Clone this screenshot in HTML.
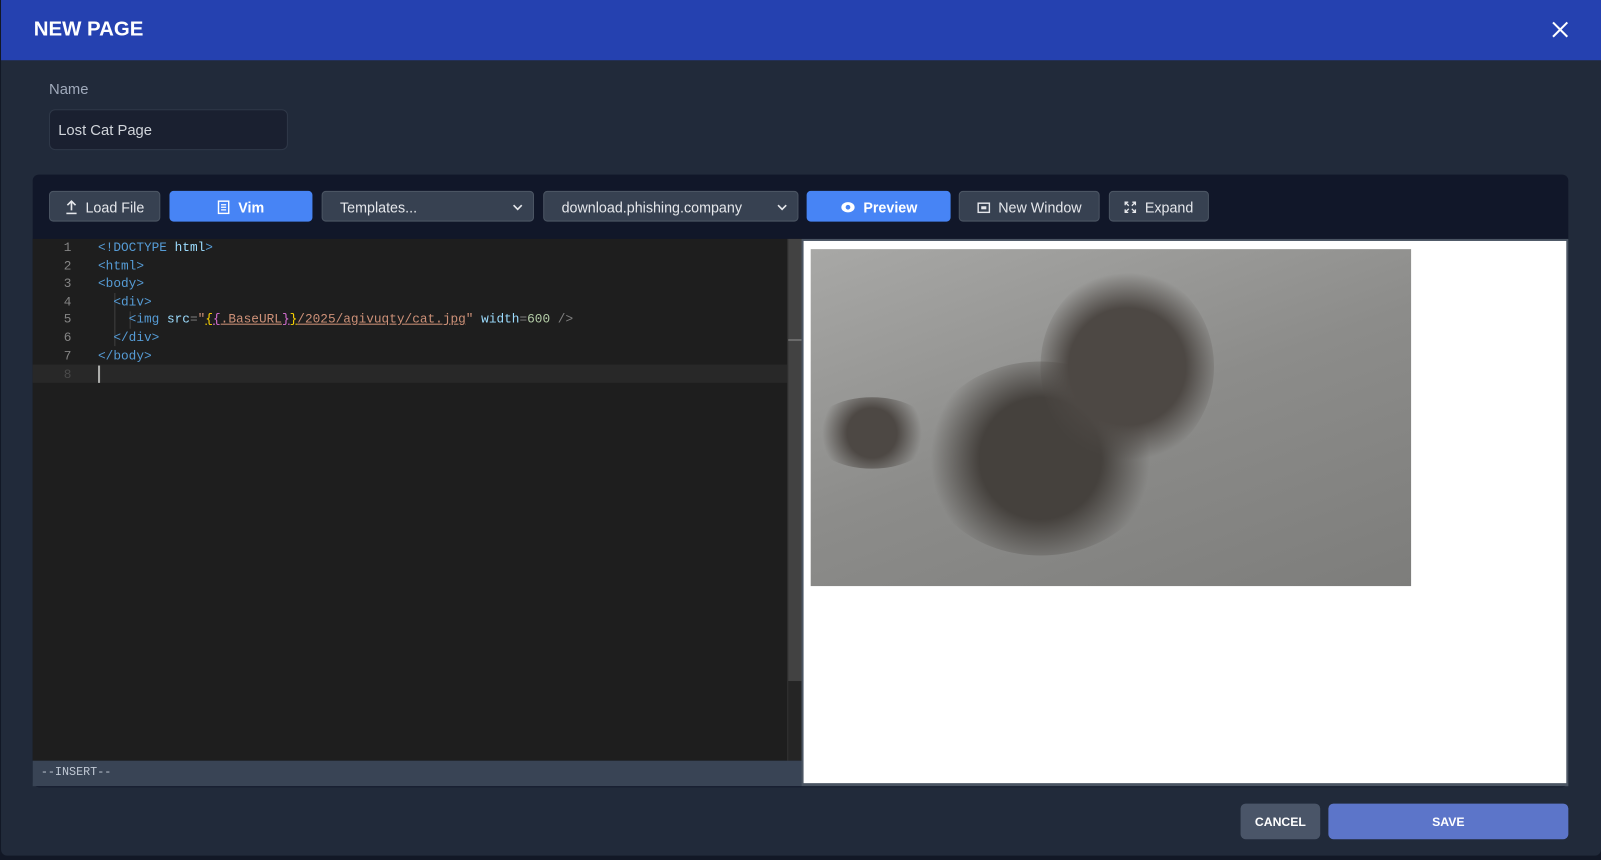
<!DOCTYPE html>
<html><head><meta charset="utf-8"><style>
html,body{margin:0;padding:0;background:#121826;overflow:hidden;width:1601px;height:860px}
#w{position:absolute;left:0;top:0;width:1568px;height:842px;transform:scale(1.02105);transform-origin:0 0;font-family:"Liberation Sans",sans-serif}
.a{position:absolute}
.modal{left:1px;top:0;width:1567px;height:838px;background:#212a3a;border-radius:0 0 6px 6px}
.hdr{left:1px;top:0;width:1567px;height:59px;background:#2541b0}
.btn{position:absolute;top:187px;height:30px;box-sizing:border-box;border-radius:4px;background:#374151;border:1px solid #4b5563;color:#e5e7eb;font-size:14px;display:flex;align-items:center;justify-content:center;gap:8px;padding-top:2px}
.blue{background:#4784f5;border-color:#4784f5;color:#fff;font-weight:bold}
.sel{justify-content:space-between;padding:2px 10px 0 17px}
.code{font-family:"Liberation Mono",monospace;font-size:12.5px;color:#9cdcfe}
.ln{position:absolute;left:32px;width:38px;text-align:right;color:#858585}
.cl{position:absolute;left:96px;white-space:pre}
.t{color:#569cd6}.g{color:#808080}.at{color:#9cdcfe}.s{color:#ce9178}
</style></head><body><div id="w">
<div class="a modal"></div>
<div class="a hdr"></div>
<div class="a" style="left:33px;top:18px;color:#fff;font-size:20px;font-weight:bold">NEW PAGE</div>
<svg class="a" style="left:1519px;top:20px" width="18" height="18"><path d="M2 2L16 16M16 2L2 16" stroke="#fff" stroke-width="2"/></svg>
<div class="a" style="left:48px;top:80px;color:#a0aabb;font-size:14.5px">Name</div>
<div class="a" style="left:48px;top:107px;width:234px;height:40px;box-sizing:border-box;background:#1a2030;border:1px solid #2f3848;border-radius:6px;color:#d1d5db;font-size:14.5px;padding:12px 0 0 8px">Lost Cat Page</div>
<div class="a" style="left:32px;top:171px;width:1504px;height:600px;background:#111729;border-radius:6px"></div>
<div class="btn" style="left:48px;width:109px"><svg width="12" height="14"><path d="M6 1V10M2 5L6 1L10 5M1 13H11" stroke="#e5e7eb" stroke-width="1.6" fill="none"/></svg>Load File</div>
<div class="btn blue" style="left:166px;width:140px"><svg width="12" height="14"><rect x="1" y="1" width="10" height="12" fill="none" stroke="#fff" stroke-width="1.4"/><path d="M3.5 4.5H8.5M3.5 7H8.5M3.5 9.5H8.5" stroke="#fff" stroke-width="1.2"/></svg>Vim</div>
<div class="btn sel" style="left:315px;width:208px"><span>Templates...</span><svg width="10" height="8"><path d="M1 2L5 6L9 2" stroke="#e5e7eb" stroke-width="1.6" fill="none"/></svg></div>
<div class="btn sel" style="left:532px;width:250px"><span>download.phishing.company</span><svg width="10" height="8"><path d="M1 2L5 6L9 2" stroke="#e5e7eb" stroke-width="1.6" fill="none"/></svg></div>
<div class="btn blue" style="left:790px;width:141px"><svg width="15" height="12"><ellipse cx="7.5" cy="6" rx="6.5" ry="5" fill="#fff"/><circle cx="7.5" cy="6" r="2.3" fill="#4784f5"/></svg>Preview</div>
<div class="btn" style="left:939px;width:138px"><svg width="13" height="11"><rect x="1" y="1" width="11" height="9" fill="none" stroke="#e5e7eb" stroke-width="1.4"/><rect x="4" y="4" width="5" height="3" fill="#e5e7eb"/></svg>New Window</div>
<div class="btn" style="left:1086px;width:98px"><svg width="12" height="12"><path d="M1 4V1H4M8 1H11V4M11 8V11H8M4 11H1V8M1 1L4.5 4.5M11 1L7.5 4.5M11 11L7.5 7.5M1 11L4.5 7.5" stroke="#e5e7eb" stroke-width="1.3" fill="none"/></svg>Expand</div>
<div class="a" style="left:32px;top:234px;width:753px;height:511px;background:#1e1e1e"></div>
<div class="a" style="left:32px;top:357px;width:739px;height:18px;background:#282828"></div>
<div class="a" style="left:771px;top:234px;width:14px;height:511px;background:#252525;border-left:1px solid #333"></div>
<div class="a" style="left:772px;top:234px;width:13px;height:433px;background:#424242"></div>
<div class="a" style="left:772px;top:332px;width:13px;height:2px;background:#6a6a6a"></div>
<div class="a" style="left:112px;top:287px;width:1px;height:52px;background:#404040"></div>
<div class="a" style="left:127px;top:305px;width:1px;height:17px;background:#404040"></div>
<div class="code">
<div class="ln" style="top:236px">1</div><div class="cl" style="top:236px"><span class="t">&lt;!DOCTYPE</span> <span class="at">html</span><span class="t">&gt;</span></div>
<div class="ln" style="top:254px">2</div><div class="cl t" style="top:254px">&lt;html&gt;</div>
<div class="ln" style="top:271px">3</div><div class="cl t" style="top:271px">&lt;body&gt;</div>
<div class="ln" style="top:289px">4</div><div class="cl t" style="top:289px">  &lt;div&gt;</div>
<div class="ln" style="top:306px">5</div><div class="cl" style="top:306px">    <span class="t">&lt;img</span> <span class="at">src</span><span class="g">=</span><span class="s">"<span style="color:#ffd700;text-decoration:underline">{</span><span style="color:#da70d6;text-decoration:underline">{</span><span style="text-decoration:underline">.BaseURL</span><span style="color:#da70d6;text-decoration:underline">}</span><span style="color:#ffd700;text-decoration:underline">}</span><span style="text-decoration:underline">/2025/agivuqty/cat.jpg</span>"</span> <span class="at">width</span><span class="g">=</span><span style="color:#b5cea8">600</span> <span class="g">/&gt;</span></div>
<div class="ln" style="top:324px">6</div><div class="cl t" style="top:324px">  &lt;/div&gt;</div>
<div class="ln" style="top:342px">7</div><div class="cl t" style="top:342px">&lt;/body&gt;</div>
<div class="ln" style="top:360px;color:#4a4a4a">8</div>
</div>
<div class="a" style="left:96px;top:358px;width:2px;height:17px;background:#aeafad"></div>
<div class="a" style="left:32px;top:745px;width:753px;height:25px;background:#394455"></div>
<div class="a code" style="left:40px;top:750px;color:#c0c8d4;font-size:11.5px">--INSERT--</div>
<div class="a" style="left:785px;top:234px;width:751px;height:536px;background:#4b5563"></div>
<div class="a" style="left:787px;top:236px;width:747px;height:531px;background:#fff"></div>
<div class="a" style="left:794px;top:244px;width:588px;height:330px;background:linear-gradient(160deg,#a8a8a6 0%,#8c8c8a 50%,#7d7d7b 100%);overflow:hidden">
<div class="a" style="left:110px;top:110px;width:230px;height:190px;border-radius:50%;background:radial-gradient(circle,#45413d 40%,rgba(60,56,52,0) 72%)"></div>
<div class="a" style="left:225px;top:20px;width:170px;height:190px;border-radius:50%;background:radial-gradient(circle,#4d4844 45%,rgba(70,65,60,0) 72%)"></div>
<div class="a" style="left:0px;top:145px;width:120px;height:70px;border-radius:50%;background:radial-gradient(circle,#4d4844 35%,rgba(70,65,60,0) 70%)"></div>
</div>
<div class="a" style="left:1215px;top:787px;width:78px;height:35px;background:#4a5568;border-radius:5px;color:#fff;font-size:12px;font-weight:bold;text-align:center;line-height:37px">CANCEL</div>
<div class="a" style="left:1301px;top:787px;width:235px;height:35px;background:#5c75c9;border-radius:5px;color:#fff;font-size:12px;font-weight:bold;text-align:center;line-height:37px">SAVE</div>
</div></body></html>
